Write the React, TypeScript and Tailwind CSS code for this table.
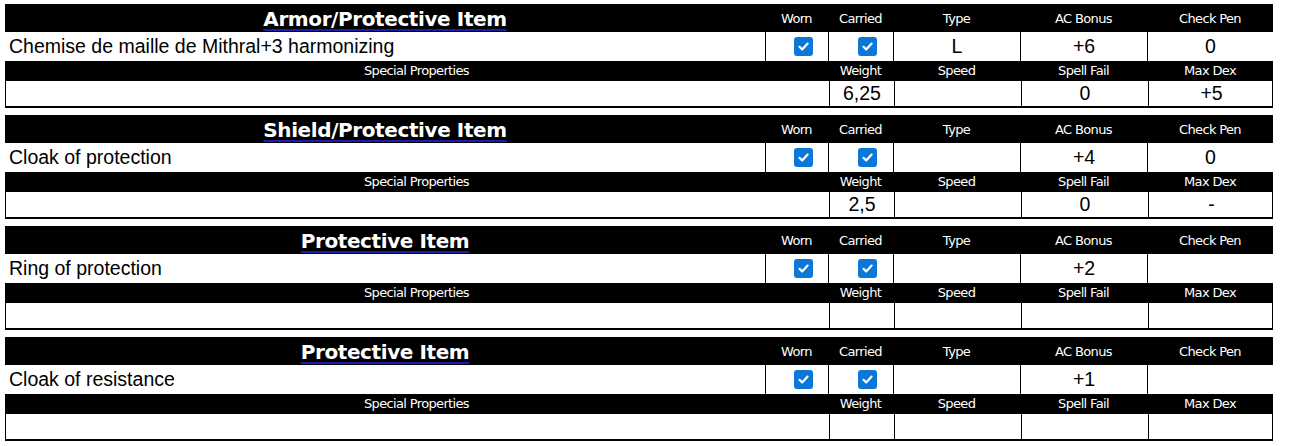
import React from "react";

type Item = {
  title: string;
  name: string;
  type: string;
  ac: string;
  checkPen: string;
  weight: string;
  speed: string;
  spellFail: string;
  maxDex: string;
};

const items: Item[] = [
  { title: "Armor/Protective Item", name: "Chemise de maille de Mithral+3 harmonizing", type: "L", ac: "+6", checkPen: "0", weight: "6,25", speed: "", spellFail: "0", maxDex: "+5" },
  { title: "Shield/Protective Item", name: "Cloak of protection", type: "", ac: "+4", checkPen: "0", weight: "2,5", speed: "", spellFail: "0", maxDex: "-" },
  { title: "Protective Item", name: "Ring of protection", type: "", ac: "+2", checkPen: "", weight: "", speed: "", spellFail: "", maxDex: "" },
  { title: "Protective Item", name: "Cloak of resistance", type: "", ac: "+1", checkPen: "", weight: "", speed: "", spellFail: "", maxDex: "" },
];

const label = "text-white text-[13px] tracking-[-0.05em] font-['DejaVu_Sans',sans-serif] text-center";
const val = "text-black text-[19.5px] font-['Liberation_Sans',Arial,sans-serif] text-center leading-none";

function Check() {
  return (
    <div className="w-[19px] h-[19px] rounded-[3px] bg-[#0b78d8] flex items-center justify-center">
      <svg width="13" height="13" viewBox="0 0 13 13" fill="none">
        <path d="M2.5 6.8 L5.2 9.4 L10.6 3.6" stroke="white" strokeWidth="2.2" strokeLinecap="round" strokeLinejoin="round" />
      </svg>
    </div>
  );
}

function Block({ it }: { it: Item }) {
  return (
    <div className="flex flex-col w-[1268px]">
      <div className="grid grid-cols-[760px_63px_65px_127px_127px_126px] h-[28px] bg-black items-center">
        <div className="text-center">
          <span className="text-white text-[20px] font-bold font-['DejaVu_Sans',sans-serif] tracking-[-0.02em] underline decoration-[#1c1ca8] decoration-2 underline-offset-[3px]">
            {it.title}
          </span>
        </div>
        <div className={label}>Worn</div>
        <div className={label}>Carried</div>
        <div className={label}>Type</div>
        <div className={label}>AC Bonus</div>
        <div className={label}>Check Pen</div>
      </div>
      <div className="grid grid-cols-[760px_63px_65px_127px_127px_126px] h-[29px] bg-white">
        <div className="flex items-center pl-[4px] text-black text-[19.5px] font-['Liberation_Sans',Arial,sans-serif]">{it.name}</div>
        <div className="border-l border-black flex items-center justify-center pl-[12px]"><Check /></div>
        <div className="border-l border-black flex items-center justify-center pl-[12px]"><Check /></div>
        <div className={`border-l border-black flex items-center justify-center ${val}`}>{it.type}</div>
        <div className={`border-l border-black flex items-center justify-center ${val}`}>{it.ac}</div>
        <div className={`border-l border-black flex items-center justify-center ${val}`}>{it.checkPen}</div>
      </div>
      <div className="grid grid-cols-[823px_65px_127px_127px_126px] h-[20px] bg-black items-center">
        <div className={label}>Special Properties</div>
        <div className={label}>Weight</div>
        <div className={label}>Speed</div>
        <div className={label}>Spell Fail</div>
        <div className={label}>Max Dex</div>
      </div>
      <div className="grid grid-cols-[823px_65px_127px_127px_126px] h-[27px] bg-white border-l border-r border-b-[2px] border-black">
        <div></div>
        <div className={`border-l border-black flex items-center justify-center ${val}`}>{it.weight}</div>
        <div className={`border-l border-black flex items-center justify-center ${val}`}>{it.speed}</div>
        <div className={`border-l border-black flex items-center justify-center ${val}`}>{it.spellFail}</div>
        <div className={`border-l border-black flex items-center justify-center ${val}`}>{it.maxDex}</div>
      </div>
    </div>
  );
}

export default function App() {
  return (
    <div className="w-[1313px] h-[446px] bg-white pl-[5px] pt-[4px] flex flex-col gap-[7px]">
      {items.map((it, i) => (
        <Block key={i} it={it} />
      ))}
    </div>
  );
}
